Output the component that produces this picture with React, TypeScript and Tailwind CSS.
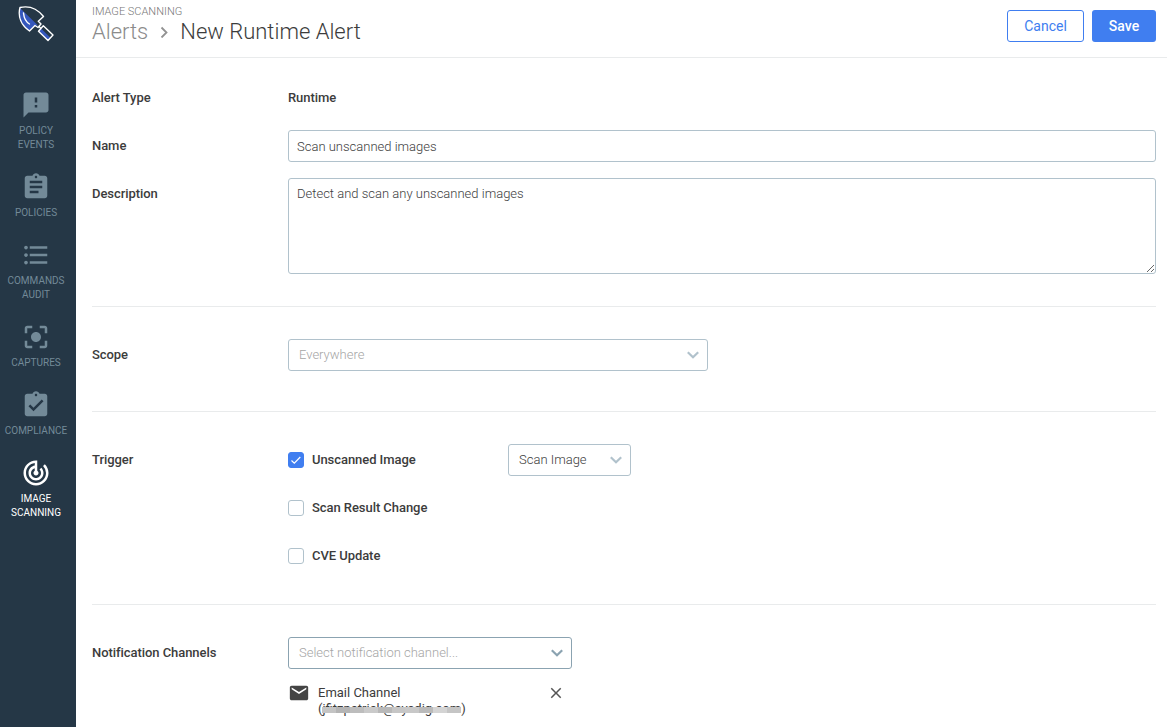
import type { ReactNode } from "react";
import type { IconType } from "react-icons";
import {
  MdAssignment,
  MdAssignmentTurnedIn,
  MdCenterFocusStrong,
  MdClose,
  MdEmail,
  MdFeedback,
  MdFormatListBulleted,
  MdTrackChanges,
} from "react-icons/md";

const navItems: { label: string; icon: IconType; active?: boolean }[] = [
  { label: "POLICY EVENTS", icon: MdFeedback },
  { label: "POLICIES", icon: MdAssignment },
  { label: "COMMANDS AUDIT", icon: MdFormatListBulleted },
  { label: "CAPTURES", icon: MdCenterFocusStrong },
  { label: "COMPLIANCE", icon: MdAssignmentTurnedIn },
  { label: "IMAGE SCANNING", icon: MdTrackChanges, active: true },
];

function Logo() {
  return (
    <svg className="ml-4 mt-1 h-10 w-10" viewBox="0 0 40 40" fill="none">
      <path d="M4 4 L22 21.500 L19 21.500 L13.500 27 C5.500 21.500 1.500 13 4 4 Z" fill="#3557bd" />
      <path d="M22.500 27.300 L25 24.500 L34.500 33.700 L32 36.500 Z" fill="#3557bd" />
      <path
        d="M4 3.500 C13 1.500 21.500 5 27.500 12.500 L22.300 17.300 L25 20 L22 23.500 L19 21.500 L13.500 27 C5.500 21.500 1.500 13 4 3.500 Z M27.300 21.800 L37 31 L32 36.500 L22.500 27.300 Z M22.500 22 L25 24.500"
        stroke="white"
        strokeWidth="1.400"
        strokeLinejoin="round"
      />
      <path d="M7.500 9 C8 14 10 18 13.500 20" stroke="white" strokeWidth="1.400" strokeLinecap="round" />
    </svg>
  );
}

function Sidebar() {
  return (
    <aside className="flex w-[76px] shrink-0 flex-col bg-[#253746]">
      <Logo />
      <nav className="mt-[46px] flex w-[72px] flex-col gap-5">
        {navItems.map(({ label, icon: Icon, active }) => (
          <a
            key={label}
            className={`flex flex-col items-center gap-1 text-center text-[10px] leading-[14px] ${
              active ? "text-white" : "text-[#738a98]"
            }`}
          >
            <Icon size={30} />
            <span className={label.includes(" ") ? "w-[60px]" : ""}>{label}</span>
          </a>
        ))}
      </nav>
    </aside>
  );
}

function Chevron({ className }: { className: string }) {
  return (
    <svg className={`h-2 w-3 ${className}`} viewBox="0 0 12 8" fill="none" stroke="currentColor" strokeWidth="2.2">
      <path d="M0.800 1.200 L6 6.200 L11.200 1.200" />
    </svg>
  );
}

function Select({ className, chevron, children }: { className: string; chevron: string; children: ReactNode }) {
  return (
    <div className={`flex h-8 items-center justify-between rounded-[3px] border pl-[10px] pr-2 font-light ${className}`}>
      <span className="-mt-px">{children}</span>
      <Chevron className={chevron} />
    </div>
  );
}

function Row({ label, children }: { label: string; children: ReactNode }) {
  return (
    <div className="flex">
      <div className="flex h-8 w-[196px] shrink-0 items-center font-medium tracking-[-0.06px]">
        <span className="-mt-px">{label}</span>
      </div>
      <div className="min-w-0 flex-1">{children}</div>
    </div>
  );
}

function CheckOption({ label, checked }: { label: string; checked?: boolean }) {
  return (
    <div className="flex h-8 w-[220px] items-center gap-2 font-medium tracking-[-0.06px]">
      <span
        className={`flex h-4 w-4 items-center justify-center rounded-[3px] border ${
          checked ? "border-[#407ef0] bg-[#407ef0]" : "border-[#b1c2cc]"
        }`}
      >
        {checked && (
          <svg className="h-[10px] w-[10px]" viewBox="0 0 10 10" fill="none" stroke="white" strokeWidth="1.200">
            <path d="M0.500 5.500 L3.300 8.200 L9.300 2" />
          </svg>
        )}
      </span>
      <span className="-mt-px">{label}</span>
    </div>
  );
}

export default function App() {
  return (
    <div className="flex h-[727px] w-[1167px] overflow-hidden bg-white font-['Roboto',sans-serif] text-[13px] leading-4 text-[#3c3c3c]">
      <Sidebar />
      <main className="min-w-0 flex-1">
        <header className="flex h-[58px] items-start justify-between border-b border-[#e9ebec] pl-4 pr-[11px]">
          <div className="pt-[5px]">
            <div className="text-[11px] font-light leading-[14px] text-[#777]">IMAGE SCANNING</div>
            <h1 className="flex items-center text-[22px] font-light leading-[26px]">
              <span className="text-[#8b8b8b]">Alerts</span>
              <svg className="ml-3 mr-[11px] h-3 w-[9px]" viewBox="0 0 9 12" fill="none" stroke="#929292" strokeWidth="1.800">
                <path d="M1.500 1.500 L6.500 6.500 L1.500 11.500" />
              </svg>
              <span>New Runtime Alert</span>
            </h1>
          </div>
          <div className="flex gap-2 pt-[10px] text-sm font-medium">
            <button className="h-8 w-[77px] rounded-[3px] border border-[#407ef0] font-normal text-[#407ef0]">Cancel</button>
            <button className="h-8 w-16 rounded-[3px] bg-[#407ef0] text-white">Save</button>
          </div>
        </header>

        <form className="pl-4 pr-[11px]">
          <section className="flex flex-col gap-4 border-b border-[#e9ebec] pb-8 pt-6">
            <Row label="Alert Type">
              <div className="flex h-8 items-center font-medium tracking-[-0.06px]">
                <span className="-mt-px">Runtime</span>
              </div>
            </Row>
            <Row label="Name">
              <input
                className="block h-8 w-full rounded-[3px] border border-[#b1c2cc] px-2 font-light"
                defaultValue="Scan unscanned images"
              />
            </Row>
            <Row label="Description">
              <textarea
                className="block h-24 w-full resize rounded-[3px] border border-[#b1c2cc] px-2 py-[7px] font-light"
                defaultValue="Detect and scan any unscanned images"
              />
            </Row>
          </section>

          <section className="border-b border-[#e9ebec] pb-10 pt-8">
            <Row label="Scope">
              <Select className="w-[420px] border-[#b1c2cc] text-[#a5a5a5]" chevron="text-[#b1c2cc]">
                Everywhere
              </Select>
            </Row>
          </section>

          <section className="border-b border-[#e9ebec] py-8">
            <Row label="Trigger">
              <div className="flex flex-col gap-4">
                <div className="flex">
                  <CheckOption label="Unscanned Image" checked />
                  <Select className="w-[123px] border-[#b1c2cc]" chevron="text-[#b1c2cc]">
                    Scan Image
                  </Select>
                </div>
                <CheckOption label="Scan Result Change" />
                <CheckOption label="CVE Update" />
              </div>
            </Row>
          </section>

          <section className="pt-8">
            <Row label="Notification Channels">
              <Select className="w-[284px] border-[#8ba3b1] text-[#a5a5a5]" chevron="text-[#8ba3b1]">
                Select notification channel...
              </Select>
              <div className="mt-4 flex w-[284px] items-start">
                <MdEmail size={22} className="-mt-[3px] text-[#444]" />
                <div className="ml-2 flex-1 font-normal">
                  <div>Email Channel</div>
                  <div className="relative w-fit">
                    (jfitzpatrick@sysdig.com)
                    <span className="absolute left-1 top-[6px] flex h-[6px] w-[139px]">
                      <span className="flex-1 bg-[#c4c4c4]" />
                      <span className="flex-1 bg-[#b4b4b4]" />
                      <span className="flex-1 bg-[#bdbdbd]" />
                      <span className="flex-1 bg-[#cacaca]" />
                      <span className="flex-1 bg-[#b8b8b8]" />
                      <span className="flex-1 bg-[#c6c6c6]" />
                      <span className="flex-1 bg-[#c8c8c8]" />
                      <span className="flex-1 bg-[#bababa]" />
                      <span className="flex-1 bg-[#d4d4d4]" />
                      <span className="flex-1 bg-[#c5c5c5]" />
                    </span>
                  </div>
                </div>
                <MdClose size={18} className="-mt-px mr-[7px] text-[#555]" />
              </div>
            </Row>
          </section>
        </form>
      </main>
    </div>
  );
}
